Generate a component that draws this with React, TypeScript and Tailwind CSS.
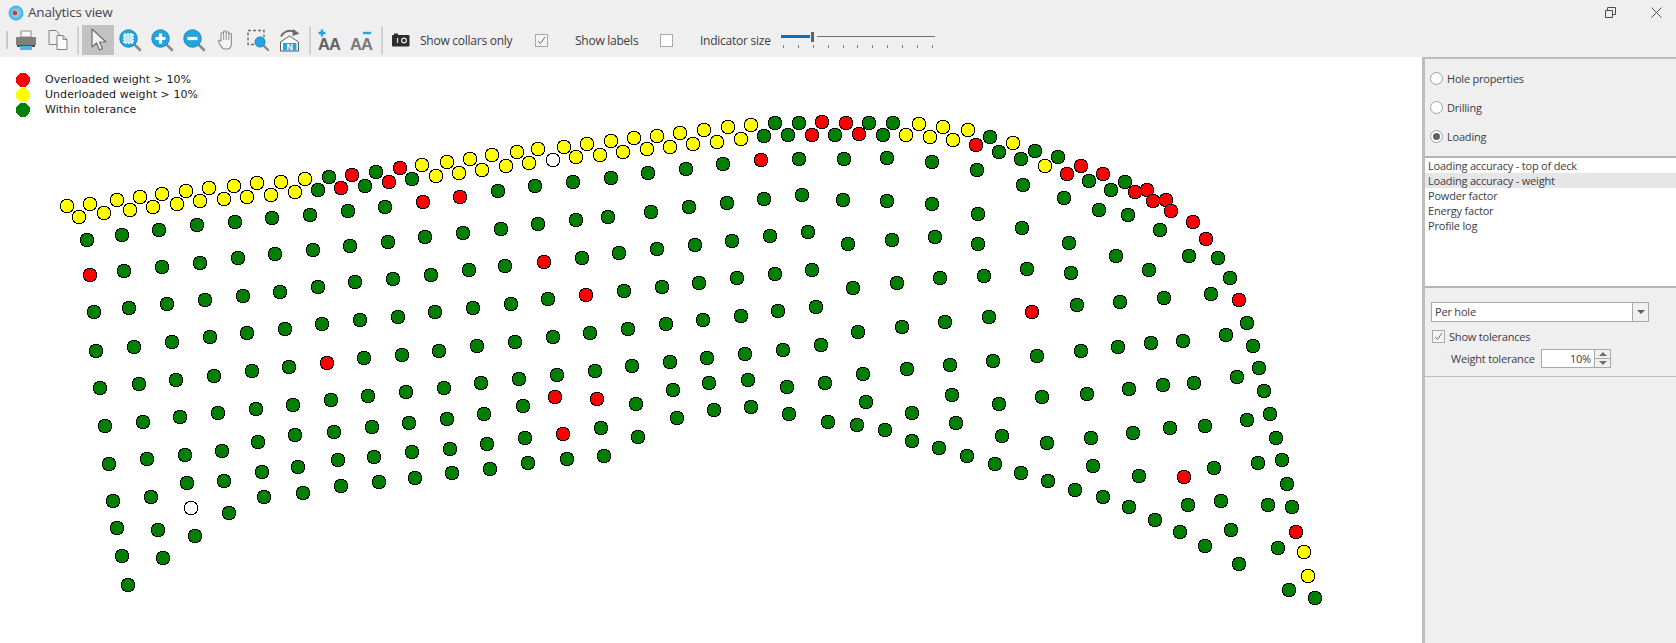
import React from "react";

const G = "#008000", R = "#ff0000", Y = "#ffff00", W = "#ffffff";

const yellow: number[][] = [[67,206],[79,217],[90,204],[104,213],[117,200],[130,210],[140,197],[153,207],[162,194],[177,204],[186,191],[200,201],[209,188],[224,199],[234,186],[247,197],[257,183],[271,195],[281,182],[295,192],[305,179],[422,165],[436,176],[447,162],[459,173],[470,159],[482,170],[492,155],[506,166],[517,152],[529,163],[538,149],[564,147],[576,157],[587,144],[600,155],[611,141],[623,152],[634,138],[647,149],[657,136],[670,147],[680,133],[693,144],[704,130],[717,142],[728,127],[741,139],[751,125],[906,135],[919,124],[930,137],[943,127],[953,140],[968,130],[1013,143],[1045,166],[1304,552],[1308,576]];

const red: number[][] = [[341,188],[352,175],[389,182],[400,168],[812,135],[822,122],[846,123],[859,134],[976,145],[1067,174],[1081,166],[1103,174],[1147,190],[1135,192],[1153,201],[1166,200],[1171,211],[1193,222],[1206,239],[423,202],[460,197],[761,160],[90,275],[544,262],[586,295],[327,363],[555,397],[597,399],[563,434],[1032,312],[1184,477],[1296,532],[1239,300]];

const white: number[][] = [[553,160],[191,508]];

const green: number[][] = [[318,190],[329,177],[365,186],[376,172],[412,179],[764,136],[775,123],[788,135],[799,123],[835,135],[869,123],[893,123],[883,135],[990,137],[999,152],[1021,159],[1035,151],[1058,157],[1089,181],[1111,190],[1125,182],
[87,240],[122,235],[159,230],[197,225],[235,222],[272,218],[310,215],[348,211],[385,207],[498,191],[535,186],[573,182],[611,178],[648,173],[686,169],[723,164],[799,159],[844,159],[887,158],[932,162],[977,170],[1023,185],[1064,198],[1099,210],[1128,215],[1160,230],
[124,271],[162,267],[200,263],[238,258],[275,254],[313,250],[350,246],[388,242],[425,237],[463,233],[501,229],[538,224],[576,220],[608,217],[651,212],[689,207],[727,203],[764,199],[802,195],[843,200],[887,201],[932,204],[978,214],[1022,228],[1069,243],[1116,256],[1189,256],[1218,258],
[94,312],[129,308],[167,304],[205,300],[243,296],[280,292],[318,287],[355,282],[393,279],[431,275],[469,270],[505,266],[582,258],[619,253],[657,249],[695,245],[732,241],[770,236],[808,232],[848,244],[892,240],[935,237],[978,244],[1027,269],[1071,273],[1149,270],[1230,278],
[96,351],[134,347],[172,342],[210,337],[247,333],[285,329],[322,324],[360,320],[398,317],[435,312],[473,308],[511,304],[548,299],[624,291],[662,287],[699,283],[737,278],[775,274],[812,270],[853,288],[897,283],[940,278],[984,276],[1211,294],[1164,298],[1120,302],[1077,305],[989,317],[945,322],[902,327],[858,332],[821,345],[816,307],
[402,355],[364,358],[289,367],[252,371],[214,376],[176,380],[139,384],[100,388],[439,351],[477,346],[515,342],[553,337],[590,333],[628,329],[666,324],[703,320],[741,316],[778,311],[783,350],[745,354],[707,358],[670,362],[632,366],[595,371],[557,375],[519,379],[481,383],[444,388],[406,392],[368,396],[331,400],[293,405],[256,409],[218,413],[180,417],[143,422],[105,426],
[109,464],[147,459],[185,455],[222,451],[258,442],[295,435],[334,432],[372,427],[409,423],[447,419],[484,414],[523,406],[636,404],[673,390],[709,383],[748,380],[787,387],[825,383],[863,374],[907,369],[950,365],[993,361],[1037,356],[1081,351],[1118,347],[1151,343],[1183,341],[1226,335],[1247,323],[1253,346],
[187,483],[224,481],[262,472],[298,467],[338,460],[374,457],[412,452],[450,449],[487,444],[525,438],[601,428],[638,437],[677,418],[714,410],[751,407],[789,414],[828,422],[857,425],[866,402],
[264,497],[303,493],[341,486],[379,482],[415,478],[452,473],[490,469],[528,463],[567,459],[604,456],
[113,501],[151,497],[229,513],[117,528],[158,530],[195,536],[122,556],[163,558],[128,585],
[1259,368],[1237,377],[1194,383],[1163,385],[1129,389],[1087,394],[1042,397],[999,404],[952,395],[912,413],[956,423],[885,430],[912,441],[939,448],[967,456],[995,464],[1021,473],[1048,481],[1075,490],[1103,497],[1129,507],[1155,520],[1180,532],[1205,546],[1239,564],[1231,530],[1221,501],[1188,505],[1139,476],[1214,468],[1093,466],[1002,436],[1047,443],[1091,438],[1133,433],[1170,428],[1205,426],[1247,420],[1264,391],[1270,414],[1276,438],[1282,460],[1258,463],[1287,484],[1268,505],[1292,507],[1278,548],[1289,590],[1315,598]];

const series: [number[][], string][] = [[green, G], [yellow, Y], [white, W], [red, R]];

function Sep() {
  return <div className="mx-[3px] h-[29px] w-[2px] shrink-0 bg-[#d2d2d2]" />;
}

function Btn({ children, on }: { children: React.ReactNode; on?: boolean }) {
  return (
    <div className={"flex h-[30px] w-[32px] shrink-0 items-center justify-center " + (on ? "bg-[#c2c2c2]" : "")}>
      {children}
    </div>
  );
}

function Lens({ children }: { children: React.ReactNode }) {
  return (
    <svg width="23" height="23" viewBox="0 0 23 23">
      <path d="M15.5 15.5 L21 21" stroke="#8a8a8a" strokeWidth="2.6" strokeLinecap="round" />
      <circle cx="9.5" cy="9.5" r="8.7" fill="#25a5e0" stroke="#1b86bb" strokeWidth="1" />
      {children}
    </svg>
  );
}

function Check() {
  return (
    <div className="flex h-[13px] w-[13px] shrink-0 items-center justify-center border border-[#a8a8a8] bg-[#f4f4f4]">
      <svg width="11" height="11" viewBox="0 0 11 11">
        <path d="M2 6 L4.5 8.5 L9 2" fill="none" stroke="#707070" strokeWidth="1" />
      </svg>
    </div>
  );
}

function Radio({ label, on }: { label: string; on?: boolean }) {
  return (
    <div className="flex h-[29px] items-center gap-[4px]">
      <div className="flex h-[13px] w-[13px] items-center justify-center rounded-full border border-[#a0a0a0] bg-white">
        {on && <div className="h-[7px] w-[7px] rounded-full bg-[#606060]" />}
      </div>
      <span className="pt-[1px]">{label}</span>
    </div>
  );
}

export default function App() {
  return (
    <div
      className="flex h-[643px] w-[1676px] flex-col overflow-hidden bg-[#efefef] text-[12px] text-[#3c3c46]"
      style={{ fontFamily: '"Open Sans", "Noto Sans", sans-serif' }}
    >
      {/* Title bar */}
      <div className="flex h-[25px] shrink-0 items-center pl-[8px] pr-[14px]">
        <svg width="16" height="16" viewBox="0 0 16 16">
          <defs>
            <radialGradient id="tb">
              <stop offset="0" stopColor="#a8e4f8" />
              <stop offset="1" stopColor="#3fb0e2" />
            </radialGradient>
          </defs>
          <circle cx="8" cy="8" r="7.5" fill="url(#tb)" />
          <circle cx="7" cy="8" r="2.3" fill="#d8382c" />
        </svg>
        <span className="ml-[4px] whitespace-nowrap text-[13.5px] tracking-[-0.2px] text-[#45454f]">Analytics view</span>
        <div className="ml-auto flex items-center gap-[35px]">
          <svg width="11" height="11" viewBox="0 0 11 11">
            <path d="M.5 3.5h7v7h-7z M2.5 3.5v-3h8v7h-3" fill="none" stroke="#4a4a4a" />
          </svg>
          <svg width="11" height="11" viewBox="0 0 11 11">
            <path d="M.5.5 L10.5 10.5 M10.5.5 L.5 10.5" stroke="#4a4a4a" strokeWidth="1" />
          </svg>
        </div>
      </div>

      {/* Toolbar */}
      <div className="flex h-[32px] shrink-0 items-center pb-[2px] pl-[6px]">
        <div className="mr-[2px] h-[18px] w-[2px] shrink-0 bg-[#c8c8c8]" />
        <Btn>
          <svg width="22" height="22" viewBox="0 0 22 22">
            <path d="M6 2h10v6H6z" fill="#fafafa" stroke="#8a8a8a" />
            <path d="M2 8h18a1 1 0 0 1 1 1v7H1V9a1 1 0 0 1 1-1z" fill="#7f7f7f" />
            <path d="M2 16h18v2H2z" fill="#4d4d4d" />
            <path d="M5 17h12v4H5z" fill="#4fb4e6" />
          </svg>
        </Btn>
        <Btn>
          <svg width="22" height="22" viewBox="0 0 22 22">
            <path d="M2 1.5h7l3 3v11H2z" fill="#f0f0f0" stroke="#808080" />
            <path d="M10 6.5h6l4 4v10H10z" fill="#fbfbfb" stroke="#808080" />
            <path d="M16 6.5v4h4" fill="none" stroke="#808080" />
          </svg>
        </Btn>
        <Sep />
        <Btn on>
          <svg width="20" height="24" viewBox="0 0 20 24">
            <path d="M4 1 L4 19 L8.5 15 L11.5 22 L14.5 20.5 L11.5 14 L18 14 Z" fill="#f2f2f2" stroke="#6f6f6f" strokeWidth="1.2" strokeLinejoin="round" />
          </svg>
        </Btn>
        <Btn>
          <Lens>
            <rect x="5" y="5" width="9" height="9" fill="#bfe8fa" stroke="#ffffff" strokeWidth="1.4" strokeDasharray="2 1" />
          </Lens>
        </Btn>
        <Btn>
          <Lens>
            <path d="M9.5 4.5v10M4.5 9.5h10" stroke="#ffffff" strokeWidth="3.2" />
          </Lens>
        </Btn>
        <Btn>
          <Lens>
            <path d="M4.5 9.5h10" stroke="#ffffff" strokeWidth="3.2" />
          </Lens>
        </Btn>
        <Btn>
          <svg width="20" height="22" viewBox="0 0 20 22">
            <path d="M5 12V5a1.3 1.3 0 0 1 2.6 0V3a1.3 1.3 0 0 1 2.6 0v1a1.3 1.3 0 0 1 2.6 0v1.5a1.3 1.3 0 0 1 2.6 0V15c0 3-2 5-5 5H9c-2 0-3-1-4-3l-2.5-4c-.6-1.2 1.2-2.3 2.2-1z" fill="#f5f5f5" stroke="#8c8c8c" strokeWidth="1.1" />
            <path d="M7.6 5v6M10.2 4v7M12.8 5v6" stroke="#8c8c8c" strokeWidth=".9" />
          </svg>
        </Btn>
        <Btn>
          <svg width="24" height="24" viewBox="0 0 24 24">
            <path d="M2 2.5h16v14H2z" fill="none" stroke="#6e6e6e" strokeWidth="1.4" strokeDasharray="3 2" />
            <path d="M17 17 L22 22" stroke="#8a8a8a" strokeWidth="2.4" strokeLinecap="round" />
            <circle cx="14" cy="14" r="5" fill="#25a5e0" stroke="#1b86bb" />
          </svg>
        </Btn>
        <Btn>
          <svg width="24" height="24" viewBox="0 0 24 24">
            <path d="M3 8.5C5.5 3.5 11 1.5 15.5 3.5L17 5" fill="none" stroke="#6a6a6a" strokeWidth="2" />
            <path d="M15 1 L21.5 5.5 L14.5 8 Z" fill="#6a6a6a" />
            <path d="M11.5 8 L2.5 14v9h18v-9z" fill="#ffffff" stroke="#5a5a5a" />
            <path d="M5 15h13.5v7.5H5z" fill="#25a5e0" />
            <text x="11.8" y="22" textAnchor="middle" fontSize="9" fontWeight="700" fill="#ffffff" fontFamily="Liberation Sans, sans-serif">N</text>
          </svg>
        </Btn>
        <Sep />
        <Btn>
          <svg width="24" height="24" viewBox="0 0 24 24">
            <text x="0" y="22" fontSize="16.5" fontWeight="700" fill="#626262" fontFamily="Liberation Sans, sans-serif" letterSpacing="-1">AA</text>
            <path d="M4 1.5v7M0.5 5h7" stroke="#25a5e0" strokeWidth="2.4" />
          </svg>
        </Btn>
        <Btn>
          <svg width="24" height="24" viewBox="0 0 24 24">
            <text x="0" y="22" fontSize="16.5" fontWeight="700" fill="#7a7a7a" fontFamily="Liberation Sans, sans-serif" letterSpacing="-1">AA</text>
            <path d="M13 5h8" stroke="#25a5e0" strokeWidth="2.4" />
          </svg>
        </Btn>
        <Sep />
        <div className="ml-[6px] flex items-center whitespace-nowrap tracking-[-0.25px]">
          <svg width="18" height="14" viewBox="0 0 18 14">
            <path d="M1 2h1V0.5h4V2h10.5a1 1 0 0 1 1 1v9.5a1 1 0 0 1-1 1H1a1 1 0 0 1-1-1V3a1 1 0 0 1 1-1z" fill="#2d2d2d" />
            <circle cx="12" cy="7.5" r="2.4" fill="none" stroke="#e6e6e6" strokeWidth="1.2" />
            <path d="M5.5 5v5" stroke="#e6e6e6" strokeWidth="1.2" />
          </svg>
          <span className="ml-[10px] w-[115px] pt-[1px]">Show collars only</span>
          <Check />
          <span className="ml-[27px] w-[85px] pt-[1px]">Show labels</span>
          <div className="h-[13px] w-[13px] shrink-0 border border-[#a8a8a8] bg-white" />
          <span className="ml-[27px] w-[81px] pt-[1px]">Indicator size</span>
          <div className="flex h-[30px] w-[154px] flex-col pt-[6px]">
            <div className="flex h-[11px] items-center">
              <div className="h-[3px] w-[29px] bg-[#0b6fc0]" />
              <div className="mx-[1px] h-[10px] w-[3px] bg-[#606060]" />
              <div className="ml-[2px] h-[1px] flex-1 bg-[#707070]" />
            </div>
            <div className="mt-[3px] flex justify-between px-[2px]">
              {[0, 1, 2, 3, 4, 5, 6, 7, 8, 9, 10].map((i) => (
                <div key={i} className="h-[3px] w-[1px] bg-[#808080]" />
              ))}
            </div>
          </div>
        </div>
      </div>

      {/* Body */}
      <div className="flex min-h-0 flex-1">
        <div className="relative h-full w-[1422px] bg-white">
          <svg className="absolute left-0 top-0" width="1422" height="586" viewBox="0 57 1422 586" shapeRendering="crispEdges">
            {series.map(([pts, fill]) =>
              pts.map(([x, y]) => (
                <circle key={fill + x + "-" + y} cx={x} cy={y} r="6.8" fill={fill} stroke="#000000" strokeWidth="1" />
              ))
            )}
          </svg>
          <div
            className="relative flex flex-col pl-[16px] pt-[15px] text-[11px] text-[#1a1a1a]"
            style={{ fontFamily: '"DejaVu Sans", sans-serif' }}
          >
            {[
              [R, "Overloaded weight > 10%"],
              [Y, "Underloaded weight > 10%"],
              [G, "Within tolerance"],
            ].map(([c, t]) => (
              <div key={t} className="flex h-[15px] items-center">
                <svg width="14" height="14" viewBox="0 0 14 14" shapeRendering="crispEdges">
                  <circle cx="7" cy="7" r="7" fill={c} />
                </svg>
                <span className="ml-[15px] pt-[1px] tracking-[0.05px]">{t}</span>
              </div>
            ))}
          </div>
        </div>

        <div className="flex h-full flex-1 flex-col border-l-[3px] border-[#bdbdbd] text-[11px] tracking-[-0.2px]">
          <div className="h-[2px] bg-[#bdbdbd]" />
          <div className="flex h-[97px] flex-col justify-center pl-[5px]">
            <Radio label="Hole properties" />
            <Radio label="Drilling" />
            <Radio on label="Loading" />
          </div>
          <div className="flex h-[132px] flex-col border-y-[2px] border-[#b4b4b4] bg-white pl-[3px] text-[#3c3c46]">
            <div className="flex h-[15px] items-center pt-[1px]">Loading accuracy - top of deck</div>
            <div className="-ml-[3px] flex h-[15px] items-center bg-[#e6e6e6] pl-[3px] pt-[1px]">Loading accuracy - weight</div>
            <div className="flex h-[15px] items-center pt-[1px]">Powder factor</div>
            <div className="flex h-[15px] items-center pt-[1px]">Energy factor</div>
            <div className="flex h-[15px] items-center pt-[1px]">Profile log</div>
          </div>
          <div className="flex h-[89px] flex-col border-b border-[#bdbdbd] pl-[6px] pt-[14px]">
            <div className="flex h-[20px] w-[218px] items-center border border-[#a8a8a8] bg-white pl-[3px]">
              <span className="flex-1">Per hole</span>
              <div className="flex h-full w-[16px] items-center justify-center border-l border-[#a8a8a8] bg-[#f0f0f0]">
                <div className="h-0 w-0 border-x-[4px] border-t-[4px] border-x-transparent border-t-[#606060]" />
              </div>
            </div>
            <div className="ml-[1px] mt-[7px] flex h-[15px] items-center gap-[4px]">
              <Check />
              <span className="pt-[1px]">Show tolerances</span>
            </div>
            <div className="mt-[5px] flex h-[19px] items-center pl-[20px]">
              <span className="w-[90px] whitespace-nowrap pt-[1px]">Weight tolerance</span>
              <div className="flex h-[19px] w-[70px] border border-[#a8a8a8] bg-white">
                <span className="flex-1 pr-[3px] text-right leading-[17px]">10%</span>
                <div className="flex w-[16px] flex-col border-l border-[#a8a8a8] bg-[#f0f0f0]">
                  <div className="flex flex-1 items-center justify-center border-b border-[#a8a8a8]">
                    <div className="h-0 w-0 border-x-[4px] border-b-[4px] border-x-transparent border-b-[#707070]" />
                  </div>
                  <div className="flex flex-1 items-center justify-center">
                    <div className="h-0 w-0 border-x-[4px] border-t-[4px] border-x-transparent border-t-[#707070]" />
                  </div>
                </div>
              </div>
            </div>
          </div>
        </div>
      </div>
    </div>
  );
}
